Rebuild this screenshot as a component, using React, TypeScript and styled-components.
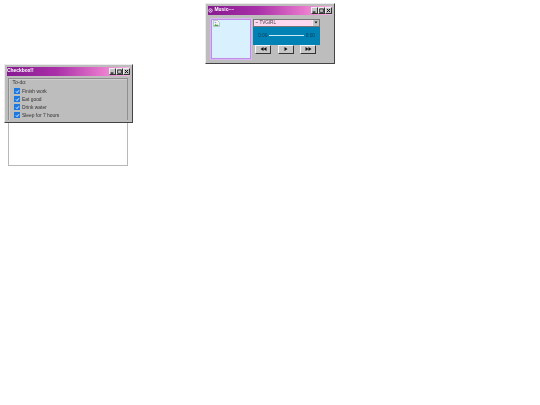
import React from "react";
import styled, { createGlobalStyle } from "styled-components";

const GlobalStyle = createGlobalStyle`
  html, body {
    margin: 0;
    padding: 0;
    background: #fff;
  }
  body {
    font-family: "Liberation Sans", Arial, sans-serif;
  }
`;

const Desktop = styled.div`
  position: relative;
  width: 540px;
  height: 405px;
  overflow: hidden;
  background: #fff;
  filter: blur(0.35px);
`;

const Window = styled.div<{ $x: number; $y: number; $w: number; $h: number }>`
  position: absolute;
  left: ${(p) => p.$x}px;
  top: ${(p) => p.$y}px;
  width: ${(p) => p.$w}px;
  height: ${(p) => p.$h}px;
  box-sizing: border-box;
  padding: 1.5px 2px 2px 1.5px;
  display: flex;
  flex-direction: column;
  background: #bdbdbd;
  border: 1px solid #ececec;
  border-right-color: #444;
  border-bottom-color: #444;
`;

const TitleBar = styled.div`
  height: 9px;
  flex-shrink: 0;
  display: flex;
  align-items: center;
  justify-content: space-between;
  padding: 0 0.5px 0 0.5px;
  background: linear-gradient(90deg, #861a90 0%, #a92fa8 40%, #e878cc 78%, #f6b8e4 100%);
`;

const TitleText = styled.div`
  display: flex;
  align-items: center;
  gap: 1.5px;
  color: #fff;
  font-size: 4.9px;
  font-weight: 700;
  line-height: 1;
`;

const TitleControls = styled.div`
  display: flex;
`;

const ControlButton = styled.div`
  width: 7px;
  height: 7px;
  box-sizing: border-box;
  display: flex;
  align-items: center;
  justify-content: center;
  background: #c4c4c4;
  border: 0.5px solid #eee;
  border-right-color: #333;
  border-bottom-color: #333;
`;

const MusicBody = styled.div`
  flex: 1;
  display: flex;
  gap: 2px;
  padding: 4px 0 0 3.5px;
`;

const Cover = styled.div`
  width: 40px;
  height: 40px;
  box-sizing: border-box;
  padding: 0.5px 1px;
  font-size: 0;
  line-height: 0;
  background: #d9f0ff;
  border: 1px solid #c08ce8;
  outline: 0.5px solid #d8b8f0;
`;

const PlayerColumn = styled.div`
  width: 67px;
  display: flex;
  flex-direction: column;
`;

const SongSelect = styled.div`
  height: 8px;
  box-sizing: border-box;
  display: flex;
  align-items: center;
  justify-content: space-between;
  padding-left: 1.5px;
  background: #ffd8f0;
  border: 0.5px solid #777;
  color: #444;
  font-size: 4.6px;
`;

const SelectArrow = styled.div`
  width: 6.5px;
  height: 100%;
  display: flex;
  align-items: center;
  justify-content: center;
  background: #c4c4c4;
  border-left: 0.5px solid #eee;
`;

const Player = styled.div`
  height: 18px;
  display: flex;
  align-items: center;
  gap: 2px;
  padding: 0 5px;
  background: #0082b4;
  color: #123f58;
  font-size: 4.8px;
`;

const Track = styled.div`
  flex: 1;
  height: 1px;
  background: #cfeaf5;
`;

const Transport = styled.div`
  display: flex;
  justify-content: space-between;
  padding: 0 4px 0 2px;
`;

const TransportButton = styled.div`
  width: 16px;
  height: 9px;
  box-sizing: border-box;
  display: flex;
  align-items: center;
  justify-content: center;
  background: #c6c6c6;
  border: 0.5px solid #f4f4f4;
  border-right-color: #333;
  border-bottom-color: #333;
`;

const CheckBody = styled.div`
  flex: 1;
  padding: 2px 2px 0 1px;
`;

const GroupBox = styled.div`
  height: 100%;
  box-sizing: border-box;
  padding: 0.5px 0 0 4px;
  border: 0.5px solid #8f8f8f;
  border-bottom: none;
  box-shadow: inset 0.5px 0.5px 0 #e0e0e0;
`;

const GroupLabel = styled.div`
  font-size: 5px;
  line-height: 7px;
  color: #333;
`;

const CheckList = styled.div`
  display: flex;
  flex-direction: column;
  gap: 2px;
  padding: 2px 0 0 1.5px;
`;

const CheckRow = styled.div`
  display: flex;
  align-items: center;
  gap: 2px;
  height: 6px;
  font-size: 4.9px;
  color: #333;
`;

const CheckMark = styled.div`
  width: 6px;
  height: 6px;
  display: flex;
  align-items: center;
  justify-content: center;
  background: #1f78e0;
`;

const Overflow = styled.div`
  position: absolute;
  left: 8px;
  top: 123px;
  width: 120px;
  height: 43px;
  box-sizing: border-box;
  background: #fff;
  border: 0.5px solid #b8b8b8;
  border-top: none;
`;

const Controls = () => (
  <TitleControls>
    <ControlButton>
      <svg width="5" height="5" viewBox="0 0 8 8">
        <rect x="1" y="5.5" width="4.5" height="2" fill="#111" />
      </svg>
    </ControlButton>
    <ControlButton>
      <svg width="5" height="5" viewBox="0 0 8 8">
        <path d="M1 1.5h6v5.5h-6z" fill="none" stroke="#111" strokeWidth="1.2" />
      </svg>
    </ControlButton>
    <ControlButton>
      <svg width="5" height="5" viewBox="0 0 8 8">
        <path d="M1.5 1.5l5 5M6.5 1.5l-5 5" stroke="#111" strokeWidth="1.6" />
      </svg>
    </ControlButton>
  </TitleControls>
);

const BrokenImage = () => (
  <svg width="7" height="7" viewBox="0 0 14 14">
    <path d="M1 1h8l4 4v8H1z" fill="#f4f4f4" stroke="#999" />
    <path d="M2 12l3-4 2 2 2-1 3 3z" fill="#4aa84a" />
    <circle cx="5" cy="5" r="1.6" fill="#7db4ea" />
  </svg>
);

const Rewind = () => (
  <svg width="7" height="4" viewBox="0 0 14 8">
    <path d="M7 0v8L1 4zM13 0v8L7 4z" fill="#111" />
  </svg>
);

const Play = () => (
  <svg width="4" height="4" viewBox="0 0 8 8">
    <path d="M1 0v8l6-4z" fill="#111" />
  </svg>
);

const Forward = () => (
  <svg width="7" height="4" viewBox="0 0 14 8">
    <path d="M1 0v8l6-4zM7 0v8l6-4z" fill="#111" />
  </svg>
);

const todos = ["Finish work", "Eat good", "Drink water", "Sleep for 7 hours"];

export default function App() {
  return (
    <Desktop>
      <GlobalStyle />
      <Window $x={205} $y={3} $w={130} $h={61}>
        <TitleBar>
          <TitleText>
            <svg width="5" height="5" viewBox="0 0 10 10">
              <circle cx="5" cy="5" r="3.4" fill="none" stroke="#fff" strokeWidth="1.6" />
              <circle cx="5" cy="5" r="1" fill="#fff" />
            </svg>
            Music~~
          </TitleText>
          <Controls />
        </TitleBar>
        <MusicBody>
          <Cover>
            <BrokenImage />
          </Cover>
          <PlayerColumn>
            <SongSelect>
              ~ TVGIRL
              <SelectArrow>
                <svg width="4" height="3" viewBox="0 0 8 6">
                  <path d="M1 1h6L4 5z" fill="#111" />
                </svg>
              </SelectArrow>
            </SongSelect>
            <Player>
              <span>0:00</span>
              <Track />
              <span>0:00</span>
            </Player>
            <Transport>
              <TransportButton>
                <Rewind />
              </TransportButton>
              <TransportButton>
                <Play />
              </TransportButton>
              <TransportButton>
                <Forward />
              </TransportButton>
            </Transport>
          </PlayerColumn>
        </MusicBody>
      </Window>
      <Overflow />
      <Window $x={4} $y={64} $w={129} $h={59}>
        <TitleBar>
          <TitleText>Checkbox!!</TitleText>
          <Controls />
        </TitleBar>
        <CheckBody>
          <GroupBox>
            <GroupLabel>To-do:</GroupLabel>
            <CheckList>
              {todos.map((todo) => (
                <CheckRow key={todo}>
                  <CheckMark>
                    <svg width="5" height="5" viewBox="0 0 10 10">
                      <path d="M2 5l2 2.2L8 2.5" fill="none" stroke="#fff" strokeWidth="1.8" />
                    </svg>
                  </CheckMark>
                  {todo}
                </CheckRow>
              ))}
            </CheckList>
          </GroupBox>
        </CheckBody>
      </Window>
    </Desktop>
  );
}
